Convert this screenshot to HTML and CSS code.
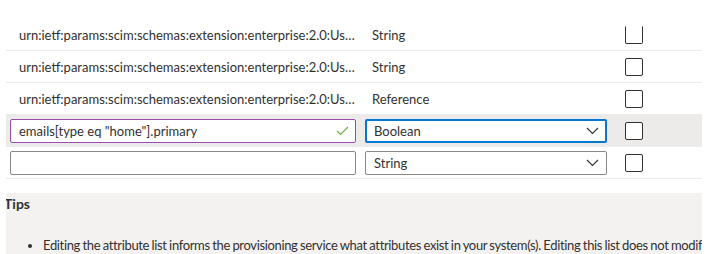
FILE: index.html
```html
<!DOCTYPE html>
<html lang="en">
<head>
    <meta charset="UTF-8">
    <title>Edit attribute list</title>
    <link rel="stylesheet" href="styles.css">
</head>
<body>
    <div class="attr-table">
        <div class="row">
            <div class="cell"><span class="name">urn:ietf:params:scim:schemas:extension:enterprise:2.0:User:manager.displayName</span></div>
            <div class="cell"><span class="type">String</span></div>
            <div class="cell"><span class="checkbox cut"></span></div>
        </div>
        <div class="row">
            <div class="cell"><span class="name">urn:ietf:params:scim:schemas:extension:enterprise:2.0:User:manager.value</span></div>
            <div class="cell"><span class="type">String</span></div>
            <div class="cell"><span class="checkbox"></span></div>
        </div>
        <div class="row">
            <div class="cell"><span class="name">urn:ietf:params:scim:schemas:extension:enterprise:2.0:User:manager</span></div>
            <div class="cell"><span class="type">Reference</span></div>
            <div class="cell"><span class="checkbox"></span></div>
        </div>
        <div class="row selected">
            <div class="cell">
                <div class="text-field valid">
                    <input type="text" value='emails[type eq "home"].primary'>
                    <svg class="check" width="13" height="10" viewBox="0 0 13 10"><path d="M1 5 L4.5 8.5 L12 1" fill="none" stroke="#6bb33f" stroke-width="1.2"/></svg>
                </div>
            </div>
            <div class="cell">
                <div class="dropdown focused">
                    <span>Boolean</span>
                    <svg class="chevron" width="13" height="8" viewBox="0 0 13 8"><path d="M1 1 L6.5 6.5 L12 1" fill="none" stroke="#323130" stroke-width="1.1"/></svg>
                </div>
            </div>
            <div class="cell"><span class="checkbox"></span></div>
        </div>
        <div class="row">
            <div class="cell">
                <div class="text-field">
                    <input type="text" value="">
                </div>
            </div>
            <div class="cell">
                <div class="dropdown">
                    <span>String</span>
                    <svg class="chevron" width="13" height="8" viewBox="0 0 13 8"><path d="M1 1 L6.5 6.5 L12 1" fill="none" stroke="#323130" stroke-width="1.1"/></svg>
                </div>
            </div>
            <div class="cell"><span class="checkbox"></span></div>
        </div>
    </div>

    <div class="tips">
        <h3>Tips</h3>
        <ul>
            <li>Editing the attribute list informs the provisioning service what attributes exist in your system(s). Editing this list does not modify the schema of your application.</li>
        </ul>
    </div>
</body>
</html>
```

FILE: styles.css
```css
body {
    font-family: Lato, "Noto Sans", sans-serif;
    font-size: 13px;
    color: #323130;
    margin: 0;
    background: #fff;
}
.attr-table {
    margin: 19px 17px 0 6px;
    width: 696px;
}
.row {
    display: grid;
    grid-template-columns: 355px 250px 1fr;
    height: 31px;
    border-bottom: 1px solid #edebe9;
    align-items: center;
}
.row.selected {
    background-color: #edebe9;
}
.cell {
    padding-left: 4px;
    min-width: 0;
}
.cell:last-child {
    padding-left: 14px;
}
.name {
    display: block;
    padding-left: 9px;
    padding-right: 4px;
    white-space: nowrap;
    overflow: hidden;
    text-overflow: ellipsis;
}
.type {
    display: block;
    padding-left: 7px;
}
.text-field {
    position: relative;
    width: 346px;
    height: 24px;
    box-sizing: border-box;
    border: 1px solid #8a8886;
    border-radius: 2px;
    background: #fff;
}
.text-field.valid {
    border-color: #9b4cae;
}
.text-field input {
    width: 100%;
    height: 100%;
    box-sizing: border-box;
    border: none;
    outline: none;
    padding: 0 28px 0 8px;
    font: inherit;
    color: #323130;
    background: transparent;
}
.check {
    position: absolute;
    right: 6px;
    top: 6px;
}
.dropdown {
    display: flex;
    align-items: center;
    justify-content: space-between;
    width: 242px;
    height: 24px;
    box-sizing: border-box;
    border: 1px solid #8a8886;
    border-radius: 2px;
    background: #fff;
    padding: 0 7px 0 8px;
}
.dropdown.focused {
    border: 2px solid #0078d4;
    padding: 0 6px 0 7px;
}
.checkbox {
    display: block;
    width: 18px;
    height: 18px;
    box-sizing: border-box;
    border: 1px solid #323130;
    border-radius: 2px;
    background: #fff;
}
.checkbox.cut {
    border-top-color: transparent;
    border-radius: 0 0 2px 2px;
}
.tips {
    margin: 14px 17px 0 6px;
    width: 696px;
    height: 70px;
    background-color: #f3f2f1;
    overflow: hidden;
}
.tips h3 {
    margin: 0 0 0 -2px;
    padding-top: 1px;
    font-size: 14px;
    font-weight: 700;
    line-height: 20px;
}
.tips ul {
    margin: 21px 0 0;
    padding-left: 37px;
    white-space: nowrap;
}
.tips li {
    line-height: 20px;
    letter-spacing: -0.35px;
    word-spacing: -0.5px;
}
```
